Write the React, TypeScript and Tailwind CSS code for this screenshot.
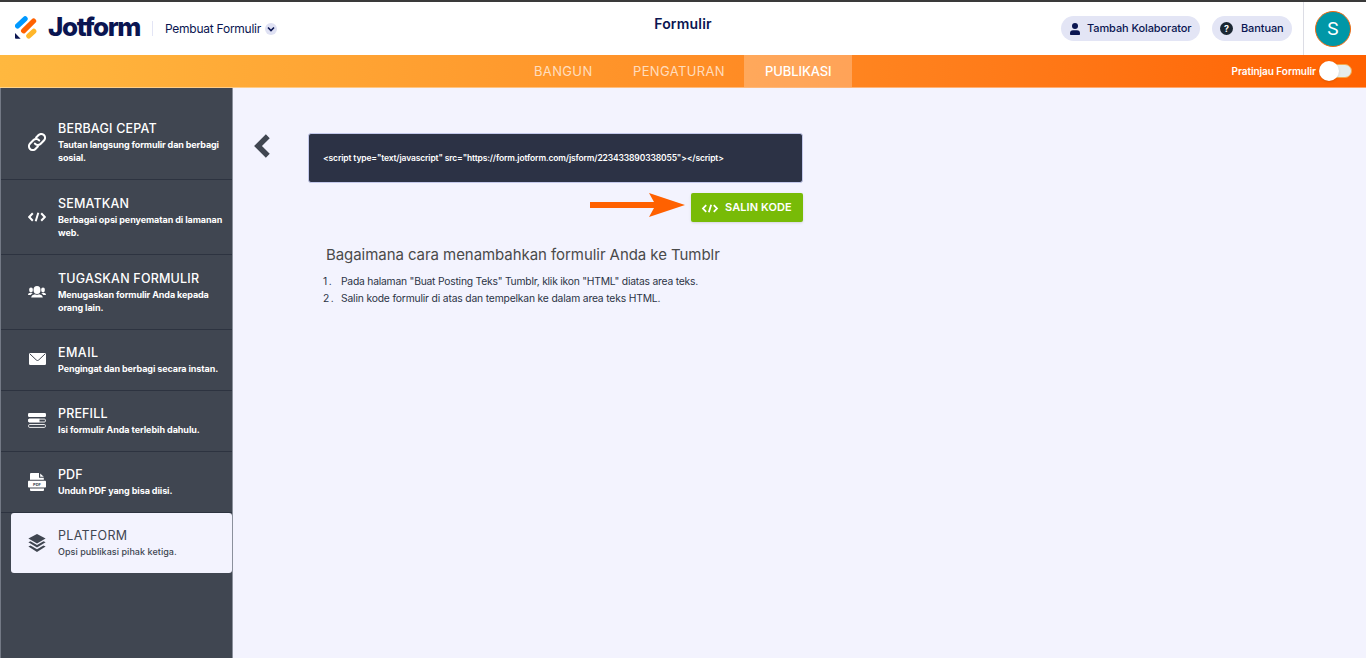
import React from "react";

interface MenuItem { title: string; lines: string[]; icon: React.ReactNode; tracking: string; subTracking: string[]; active?: boolean; }

const CodeIcon = ({ className }: { className: string }) => (
  <svg viewBox="0 0 18 10" className={className} fill="none" stroke="currentColor" strokeWidth="2">
    <path d="M4.8 1.2 1.2 5l3.6 3.8M13.2 1.2 16.8 5l-3.6 3.8M10.3.8 7.7 9.2" />
  </svg>
);

const LinkIcon = () => (
  <svg viewBox="0 0 24 24" className="w-[18px] h-[18px]" fill="none" stroke="currentColor" strokeWidth="2.8" strokeLinecap="round">
    <path d="M9.2 14.2a5 5 0 0 0 7.4.4l4.6-4.7a5 5 0 0 0-7.1-7.1l-3.2 3.1" />
    <path d="M14.8 9.8a5 5 0 0 0-7.4-.4l-4.6 4.7a5 5 0 0 0 7.1 7.1l3.2-3.1" />
  </svg>
);

const UsersIcon = () => (
  <svg viewBox="0 0 18 12" className="w-[18px] h-3" fill="currentColor">
    <ellipse cx="9" cy="4" rx="3.5" ry="3.9" />
    <path d="M3.2 11.4c.2-2 1.7-2.8 3.8-3.2 1.2.7 2.8.7 4 0 2.1.4 3.6 1.2 3.8 3.2z" />
    <ellipse cx="3" cy="4" rx="1.9" ry="2.4" />
    <ellipse cx="15" cy="4" rx="1.9" ry="2.4" />
    <path d="M0 9.1c0-1.7 1.2-2.2 2.6-2.3l2.3.8C3.6 8 3 8.4 2.7 9.1zM18 9.1c0-1.7-1.2-2.2-2.6-2.3l-2.3.8c1.3.4 1.9.8 2.2 1.5z" />
  </svg>
);

const MailIcon = () => (
  <svg viewBox="0 0 17 12" className="w-[17px] h-3 -mt-px">
    <rect width="17" height="12" rx="1.2" fill="currentColor" />
    <path d="m.8.8 6.5 6.2q1.2 1 2.4 0L16.2.8" fill="none" stroke="#404651" strokeWidth="1" />
  </svg>
);

const PrefillIcon = () => (
  <svg viewBox="0 0 18 15" className="w-[18px] h-[15px]" fill="currentColor">
    <rect x="0" y="0" width="18" height="4" rx="1.2" />
    <path d="M1.2 5.7h10.3v3.6H1.2a1 1 0 0 1-1-1V6.7a1 1 0 0 1 1-1z" />
    <rect x=".6" y="6.1" width="16.8" height="2.9" rx="1" fill="none" stroke="currentColor" strokeWidth=".9" />
    <rect x=".6" y="11.5" width="16.8" height="2.9" rx="1" fill="none" stroke="currentColor" strokeWidth=".9" />
  </svg>
);

const PdfIcon = () => (
  <svg viewBox="0 0 18 18" className="w-[18px] h-[18px]" fill="currentColor">
    <path d="M2 6.8V1a1 1 0 0 1 1-1h8v4.8h4.8v2zM12.2.4l3.6 3.4h-3.6z" />
    <rect y="7.8" width="18" height="6.8" rx=".8" />
    <path d="M2 15.6h14V17a1 1 0 0 1-1 1H3a1 1 0 0 1-1-1z" />
    <text x="9" y="12.6" textAnchor="middle" fontSize="4" fontWeight="700" fontFamily="Inter, sans-serif" fill="#404651">PDF</text>
  </svg>
);

const LayersIcon = () => (
  <svg viewBox="0 0 18 18" className="w-[18px] h-[18px]" fill="currentColor">
    <path d="m9 0 8.6 4.5L9 9.5.4 4.5z" />
    <path d="M.4 8.3 2.5 7.2 9 11l6.5-3.8 2.1 1.1L9 13.6z" />
    <path d="m.4 12.5 2.1-1.1L9 15.2l6.5-3.8 2.1 1.1L9 18z" />
  </svg>
);

const menu: MenuItem[] = [
  { title: "BERBAGI CEPAT", lines: ["Tautan langsung formulir dan berbagi", "sosial."], icon: <LinkIcon />, tracking: "tracking-[0.2px]", subTracking: ["tracking-[-0.12px]", "tracking-[-0.1px]"] },
  { title: "SEMATKAN", lines: ["Berbagai opsi penyematan di lamanan", "web."], icon: <CodeIcon className="w-[18px] h-[10px]" />, tracking: "tracking-[0.15px]", subTracking: ["tracking-[-0.08px]", "tracking-[-0.1px]"] },
  { title: "TUGASKAN FORMULIR", lines: ["Menugaskan formulir Anda kepada", "orang lain."], icon: <UsersIcon />, tracking: "tracking-[0.2px]", subTracking: ["tracking-[-0.1px]", "tracking-[-0.1px]"] },
  { title: "EMAIL", lines: ["Pengingat dan berbagi secara instan."], icon: <MailIcon />, tracking: "tracking-[0.45px]", subTracking: ["tracking-[-0.1px]"] },
  { title: "PREFILL", lines: ["Isi formulir Anda terlebih dahulu."], icon: <PrefillIcon />, tracking: "tracking-[0.15px]", subTracking: ["tracking-[-0.06px]"] },
  { title: "PDF", lines: ["Unduh PDF yang bisa diisi."], icon: <PdfIcon />, tracking: "tracking-[0.1px]", subTracking: ["tracking-[-0.08px]"] },
  { title: "PLATFORM", lines: ["Opsi publikasi pihak ketiga."], icon: <LayersIcon />, tracking: "tracking-[0.3px]", subTracking: ["tracking-[0.05px]"], active: true },
];

function Header() {
  return (
    <header className="h-[55px] bg-white border-t-2 border-[#3a3a3a] grid grid-cols-[1fr_auto_1fr] text-[#0a1551]">
      <div className="flex items-center pl-[15px]">
        <svg viewBox="0 0 22 23" className="w-[22px] h-[23px] -mt-[3px]" fill="none" strokeLinecap="round" strokeWidth="5.2">
          <path d="M2.6 9.9 10.1 2.8" stroke="#0099ff" />
          <path d="M8.6 14.8 18.6 5" stroke="#ff6100" />
          <path d="m13.8 19.9 5-4.6" stroke="#ffb629" />
          <path d="M0 17v4.8c0 .6.3.9.9.9h4.7z" fill="#0a1551" />
        </svg>
        <span className="ml-[11px] -mt-[3px] w-[93px] text-[26px] leading-none font-extrabold tracking-[-1.4px]">Jotform</span>
        <span className="w-px h-[15px] ml-[11px] bg-[#e3e5f5]" />
        <span className="ml-3 w-[97px] text-[12px] tracking-[-0.25px] whitespace-nowrap">Pembuat Formulir</span>
        <span className="ml-[3px] w-3 h-3 rounded-full bg-[#dfe1f3] flex items-center justify-center">
          <svg viewBox="0 0 8 6" className="w-2 h-1.5" fill="none" stroke="currentColor" strokeWidth="1.6"><path d="m1 1.5 3 3 3-3" /></svg>
        </span>
      </div>
      <h1 className="mt-3 text-[14px] leading-5 font-semibold tracking-[0.2px]">Formulir</h1>
      <div className="flex items-center justify-end text-[11px] font-medium">
        <button className="h-[25px] w-[139px] rounded-full bg-[#e3e5f5] flex items-center pl-[9px] whitespace-nowrap tracking-[-0.1px]">
          <svg viewBox="0 0 10 12" className="w-[10px] h-3 mr-[7px]" fill="currentColor">
            <circle cx="5" cy="3" r="3" /><path d="M0 11.2V10.5Q0 7.3 3 7.3h4q3 0 3 3.2v.7q0 .8-.8.8H.8q-.8 0-.8-.8z" />
          </svg>
          Tambah Kolaborator
        </button>
        <button className="ml-3 h-[25px] w-20 rounded-full bg-[#e3e5f5] flex items-center pl-[8px] tracking-[-0.1px]">
          <span className="w-[13px] h-[13px] mr-2 rounded-full bg-[#1b2733] text-white text-[9px] leading-[13px] font-bold text-center">?</span>
          Bantuan
        </button>
        <div className="ml-[11px] w-[63px] h-full border-l border-[#dcdde5] flex items-center pl-[11px]">
          <div className="w-9 h-9 pt-px rounded-full bg-[#0097a7] border border-[#f26a10] text-white text-[19px] flex items-center justify-center font-normal font-[Roboto,sans-serif]">S</div>
        </div>
      </div>
    </header>
  );
}

function Tabs() {
  return (
    <nav className="h-[33px] border-b border-white/40 bg-linear-to-r from-[#ffb83f] to-[#ff6100] grid grid-cols-[514px_338px_1fr] text-[13px] text-white">
      <span />
      <div className="flex items-center text-white/70">
        <span className="w-[99px] pl-5 pt-px tracking-[0.35px]">BANGUN</span>
        <span className="w-[131px] pl-5 pt-px tracking-[0.35px]">PENGATURAN</span>
        <span className="w-[108px] h-full flex items-center pl-[21px] pt-px bg-white/25 text-white font-medium tracking-[-0.1px]">PUBLIKASI</span>
      </div>
      <div className="flex items-center justify-end pr-[13px]">
        <span className="text-[10px] font-semibold whitespace-nowrap tracking-[-0.05px]">Pratinjau Formulir</span>
        <span className="ml-[3px] w-[34px] h-5 flex items-center">
          <span className="w-5 h-5 rounded-full bg-white shadow-sm z-10 shrink-0" />
          <span className="w-[25px] -ml-3 h-[14px] rounded-full bg-[#e6ecec] border border-[#f3a94e] shrink-0" />
        </span>
      </div>
    </nav>
  );
}

function Sidebar() {
  return (
    <aside className="w-[233px] bg-[#404651] border-x border-l-[#737985] border-r-[#8b909c] pt-[17px]">
      {menu.map((m) => (
        <div key={m.title}
          className={`flex items-center ${m.lines.length > 1 ? "h-[75px]" : m.active ? "h-[60px] pb-px" : "h-[61px] pb-px"} ${m.active ? "ml-[10px] rounded-[3px] bg-[#f3f3fe] text-[#404651] pl-[15px]" : "border-b border-[#2d3340] text-white pl-[25px]"}`}>
          <div className="w-[22px] shrink-0 flex justify-center">{m.icon}</div>
          <div className="ml-[10px] whitespace-nowrap">
            <div className={`text-[12.5px] leading-[17px] ${m.active ? "" : "font-medium"} ${m.tracking}`}>{m.title}</div>
            <div className="mt-px">
              {m.lines.map((l, i) => (
                <div key={l} className={`text-[9px] leading-[13px] ${m.active ? "font-medium" : "font-bold"} ${m.subTracking[i]}`}>{l}</div>
              ))}
            </div>
          </div>
        </div>
      ))}
    </aside>
  );
}

function Content() {
  return (
    <main className="flex-1 flex items-start bg-[#f3f3fe] pl-[21px]">
      <svg viewBox="0 0 16 24" className="w-4 h-6 mt-[46px] shrink-0" fill="none" stroke="#404651" strokeWidth="5.5"><path d="M13.8 2.2 4 12l9.8 9.8" /></svg>
      <section className="ml-[38px] mt-[45px] w-[495px]">
        <div className="h-[50px] rounded-[3px] border border-[#c3c8ea] bg-[#2c3245] flex items-center pl-[14px] text-white text-[8.5px] tracking-[-0.14px] font-semibold whitespace-nowrap">
          {'<script type="text/javascript" src="https://form.jotform.com/jsform/223433890338055"></script>'}
        </div>
        <div className="mt-[10px] flex justify-end items-center">
          <svg viewBox="0 0 95 24" className="w-[95px] h-6 mr-[6px] -mt-[6px]" fill="#ff6100"><path d="M0 9h64L59 0l36 12-36 12 5-9H0z" /></svg>
          <button className="w-[112px] h-[29px] rounded-[2px] bg-[#78bb07] text-white text-[11px] font-semibold flex items-center pl-[10px] shadow-sm whitespace-nowrap tracking-[0.1px]">
            <CodeIcon className="w-[18px] h-[9px] mr-[6px] mt-px" />SALIN KODE
          </button>
        </div>
        <h2 className="mt-[22px] ml-[18px] text-[15px] leading-[22px] tracking-[-0.06px] text-[#4a4a4a] whitespace-nowrap">Bagaimana cara menambahkan formulir Anda ke Tumblr</h2>
        <ol className="mt-[7px] ml-[15px] text-[10.3px] leading-[17px] text-[#2c3345] whitespace-nowrap">
          <li className="flex">
            <span className="w-[18px] tracking-[1.5px]">1.</span>
            <span className="tracking-[-0.21px]">Pada halaman "Buat Posting Teks" Tumblr, klik ikon "HTML" diatas area teks.</span>
          </li>
          <li className="flex">
            <span className="w-[18px] tracking-[1.5px]">2.</span>
            <span className="tracking-[-0.16px]">Salin kode formulir di atas dan tempelkan ke dalam area teks HTML.</span>
          </li>
        </ol>
      </section>
    </main>
  );
}

export default function App() {
  return (
    <div className="h-screen flex flex-col overflow-hidden font-[Inter,sans-serif]">
      <Header />
      <Tabs />
      <div className="flex-1 flex">
        <Sidebar />
        <Content />
      </div>
    </div>
  );
}
